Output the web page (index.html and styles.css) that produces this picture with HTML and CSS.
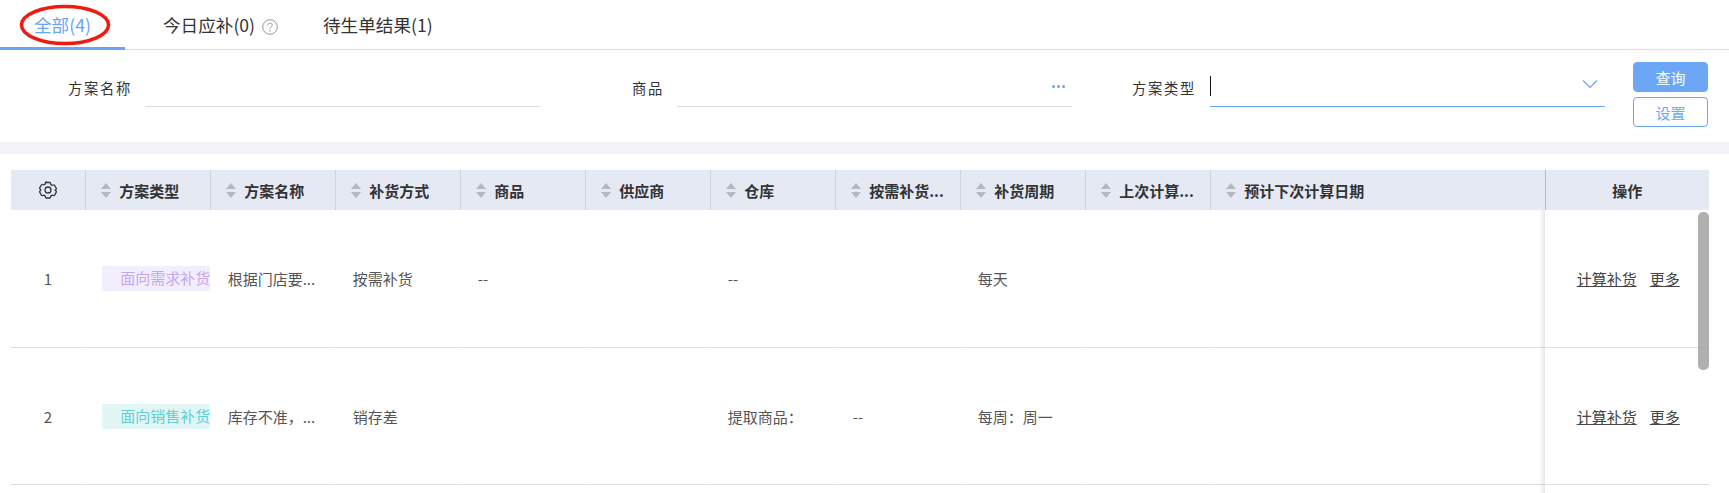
FILE: index.html
```html
<!DOCTYPE html>
<html lang="zh">
<head>
<meta charset="utf-8">
<title>补货方案</title>
<link rel="stylesheet" href="styles.css">
</head>
<body>
<div class="tabs">
  <div class="tab active">全部(4)
    <svg class="ring" width="92" height="42" viewBox="0 0 92 42"><ellipse cx="46" cy="21" rx="43.500" ry="18.500" fill="none" stroke="#f01a10" stroke-width="3.500"/></svg>
  </div>
  <div class="tab second">今日应补(0)
    <svg class="help" width="16" height="16" viewBox="0 0 16 16"><circle cx="8" cy="8" r="7.300" fill="none" stroke="#999" stroke-width="1"/><path d="M5.700 6.300c0-1.300 1-2.200 2.300-2.200s2.300.9 2.300 2c0 1.700-2.300 1.700-2.300 3.500" fill="none" stroke="#999" stroke-width="1"/><circle cx="8" cy="11.700" r=".8" fill="#999"/></svg>
  </div>
  <div class="tab third">待生单结果(1)</div>
</div>
<form class="filters">
  <div class="field f1"><label>方案名称</label><div class="line"></div></div>
  <div class="field f2"><label>商品</label><div class="line"><span class="dots"><i></i><i></i><i></i></span></div></div>
  <div class="field f3"><label>方案类型</label><div class="line focus"><span class="caret"></span>
    <svg class="chev" width="16" height="10" viewBox="0 0 16 10"><path d="M1 1.500 8 8.500l7-7" fill="none" stroke="#69a5f2" stroke-width="1.200"/></svg></div></div>
  <div class="btns"><button type="button" class="primary">查询</button><button type="button" class="ghost">设置</button></div>
</form>
<div class="band"></div>
<div class="table">
  <div class="row head">
    <div class="c c0 center"><svg width="18" height="18" viewBox="0 0 18 18"><path d="M7.200 1.500h3.600c.4 0 .6.300.7.600l.3 1.400 1.500.9 1.400-.4c.3-.1.700 0 .8.300l1.800 3.100c.2.300.1.600-.1.800L16.100 9l1.100 1.300c.2.200.3.500.1.800l-1.800 3.100c-.1.300-.5.400-.8.300l-1.400-.4-1.500.9-.3 1.400c-.1.300-.3.600-.7.600H7.200c-.4 0-.6-.3-.7-.6l-.3-1.400-1.500-.9-1.400.4c-.3.100-.7 0-.8-.3L.7 11.100c-.2-.3-.1-.6.100-.8L1.900 9 .8 7.700c-.2-.2-.3-.5-.1-.8l1.800-3.100c.1-.3.500-.4.800-.3l1.400.4 1.500-.9.300-1.400c.1-.3.300-.6.700-.6z" fill="none" stroke="#333" stroke-width="1.300"/><circle cx="9" cy="9" r="3" fill="none" stroke="#333" stroke-width="1.300"/></svg></div>
    <div class="c c1"><span class="sort"></span>方案类型</div>
    <div class="c c1"><span class="sort"></span>方案名称</div>
    <div class="c c1"><span class="sort"></span>补货方式</div>
    <div class="c c1"><span class="sort"></span>商品</div>
    <div class="c c1"><span class="sort"></span>供应商</div>
    <div class="c c1"><span class="sort"></span>仓库</div>
    <div class="c c1"><span class="sort"></span>按需补货...</div>
    <div class="c c1"><span class="sort"></span>补货周期</div>
    <div class="c c1"><span class="sort"></span>上次计算...</div>
    <div class="c c2"><span class="sort"></span>预计下次计算日期</div>
    <div class="c ops center">操作</div>
  </div>
  <div class="row body first">
    <div class="c c0 center">1</div>
    <div class="c c1 tagcell"><span class="tag purple">面向需求补货</span></div>
    <div class="c c1">根据门店要...</div>
    <div class="c c1">按需补货</div>
    <div class="c c1">--</div>
    <div class="c c1"></div>
    <div class="c c1">--</div>
    <div class="c c1"></div>
    <div class="c c1">每天</div>
    <div class="c c1"></div>
    <div class="c c2"></div>
    <div class="c ops center"><a>计算补货</a><a>更多</a></div>
  </div>
  <div class="row body">
    <div class="c c0 center">2</div>
    <div class="c c1 tagcell"><span class="tag teal">面向销售补货</span></div>
    <div class="c c1">库存不准，...</div>
    <div class="c c1">销存差</div>
    <div class="c c1"></div>
    <div class="c c1"></div>
    <div class="c c1">提取商品：</div>
    <div class="c c1">--</div>
    <div class="c c1">每周：周一</div>
    <div class="c c1"></div>
    <div class="c c2"></div>
    <div class="c ops center"><a>计算补货</a><a>更多</a></div>
  </div>
  <div class="shade"></div>
  <div class="thumb"></div>
</div>
</body>
</html>
```
FILE: styles.css
```css
* { box-sizing: border-box; }
html, body { margin: 0; height: 100%; overflow: hidden; background: #fff; }
body { font-family: "Noto Sans CJK SC", "Liberation Sans", sans-serif; color: #333; font-size: 15px; }
.tabs { display: flex; height: 50px; border-bottom: 1px solid #e0e0e0; font-size: 17.6px; color: #333; }
.tab { position: relative; display: flex; align-items: center; height: 50px; padding-bottom: 1px; white-space: nowrap; }
.active { width: 125px; padding: 2px 0 0 34px; color: #69a5f2; border-bottom: 3px solid #69a5f2; }
.second { margin-left: 38px; width: 160px; }
.help { margin: 4px 0 0 7px; }
.ring { position: absolute; left: 19px; top: 4px; }
.filters { height: 92px; display: flex; padding-top: 20px; }
.field { display: flex; align-items: flex-start; font-size: 14.3px; }
.field label { line-height: 35px; white-space: nowrap; letter-spacing: 1.700px; }
.line { position: relative; width: 395px; height: 37px; margin-left: 13px; border-bottom: 1px solid #ddd; }
.f1 { width: 540px; padding-left: 68px; }
.f2 { width: 532px; padding-left: 92px; }
.f3 { width: 561px; padding-left: 60px; }
.f3 .line { margin-left: 14px; border-color: #69a5f2; }
.dots { position: absolute; right: 7px; top: 15px; display: flex; gap: 2px; }
.dots i { width: 3px; height: 3px; border-radius: 50%; background: #69a5f2; }
.caret { position: absolute; left: 0; top: 6px; width: 1px; height: 20px; background: #111; }
.chev { position: absolute; right: 7px; top: 9px; }
.btns { display: flex; flex-direction: column; gap: 5px; margin-top: -8px; }
.btns button { width: 75px; height: 30px; border-radius: 4px; font: inherit; font-size: 15px; padding: 0; }
.primary { background: #6ba7f5; border: 1px solid #6ba7f5; color: #fff; }
.ghost { background: #fff; border: 1px solid #6ba7f5; color: #6ba7f5; }
.band { height: 12px; background: #f2f3f6; }
.table { position: relative; margin: 16px 0 0 11px; width: 1698px; }
.row { display: flex; }
.c { display: flex; align-items: center; flex: none; min-width: 0; white-space: nowrap; overflow: hidden; }
.c0 { width: 74.700px; }
.c1 { width: 125px; padding-left: 17px; }
.c2 { width: 334px; padding-left: 15.500px; }
.ops { width: 164px; position: relative; }
.center { justify-content: center; padding-left: 0; }
.head { height: 40px; background: #e5e9f4; font-weight: 700; color: #333; }
.head .c { height: 40px; border-right: 1px solid #cfd2da; }
.head .c1 { padding-left: 15.500px; }
.head .ops { border-right: 0; border-left: 1px solid #b9bcc4; }
.head .c2 { border-right: 0; }
.sort { position: relative; display: inline-block; width: 10px; height: 15px; margin-right: 8px; flex: none; }
.sort::before, .sort::after { content: ""; position: absolute; left: 0; border-left: 5px solid transparent; border-right: 5px solid transparent; }
.sort::before { top: 0; border-bottom: 6px solid #b6b8bd; }
.sort::after { bottom: 0; border-top: 6px solid #b6b8bd; }
.body { height: 137px; color: #555; }
.body .c { height: 137px; border-bottom: 1px solid #dedede; border-right: 1px solid #fff; }
.first { height: 138px; }
.body.first .c { height: 138px; padding-bottom: 1px; }
.body .tagcell { padding: 0 0 0 16.500px; border-right: 0; }
.tag { display: block; width: 108px; height: 25px; line-height: 24px; padding-left: 18px; white-space: nowrap; overflow: hidden; flex: none; }
.purple { background: #f3eefd; color: #c4a6f1; }
.teal { background: #e2f6f6; color: #5cd0d4; }
.body .ops { padding-left: 3px; border-right: 0; }
.body .ops a { text-decoration: underline; color: #444; margin: 0 6.500px; }
.shade { position: absolute; right: 164px; top: 40px; width: 6px; height: 283px; background: linear-gradient(to right, rgba(0,0,0,0), rgba(0,0,0,.09)); }
.thumb { position: absolute; right: 0; top: 42px; width: 11px; height: 158px; border-radius: 5px; background: rgba(150,150,150,.75); }
```
